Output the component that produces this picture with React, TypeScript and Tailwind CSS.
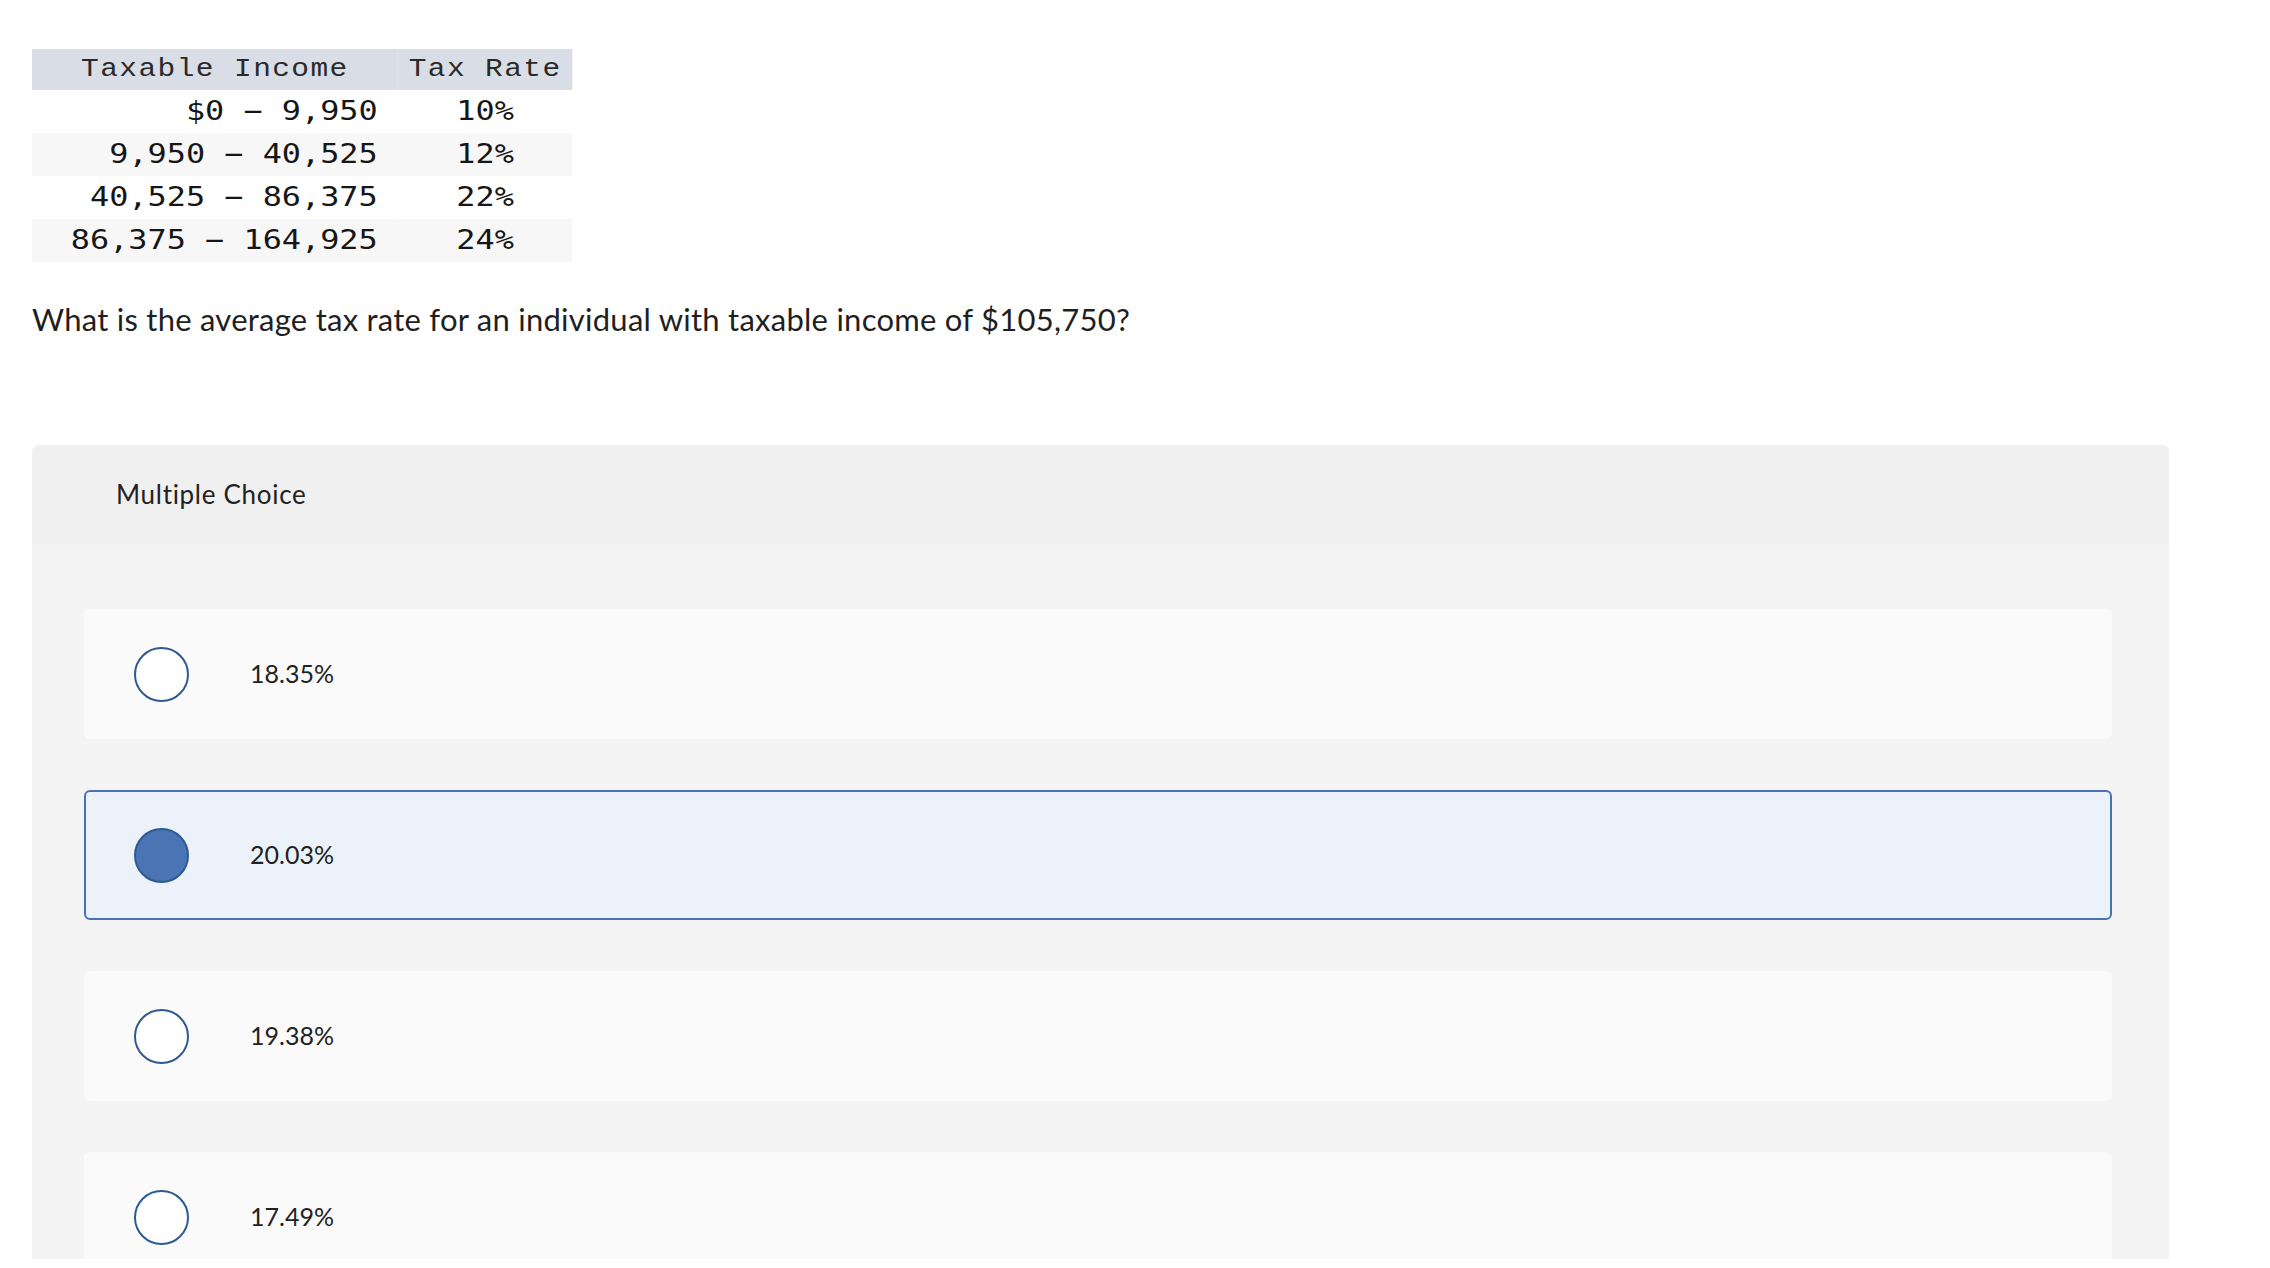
import { useState } from "react";

const brackets = [
  ["$0 − 9,950", "10%"],
  ["9,950 − 40,525", "12%"],
  ["40,525 − 86,375", "22%"],
  ["86,375 − 164,925", "24%"],
];

const choices = ["18.35%", "20.03%", "19.38%", "17.49%"];

export default function App() {
  const [picked, setPicked] = useState(1);

  return (
    <div className="min-h-screen bg-white pl-8 pt-[49px] text-[#222]">
      {/* tax table, shown slightly stretched like the source image */}
      <table className="w-[458px] origin-left scale-x-[1.18] border-collapse leading-[1.2]">
        <thead>
          <tr className="h-[41px] bg-[#d9dde6]">
            <th className="w-[310px] p-0 text-center text-[25px] font-normal tracking-[1.2px] text-[#2a2a2a] [font-family:'Liberation_Mono',monospace]">
              Taxable Income
            </th>
            <th className="p-0 text-center text-[25px] font-normal tracking-[1.2px] text-[#2a2a2a] [font-family:'Liberation_Mono',monospace]">
              Tax Rate
            </th>
          </tr>
        </thead>
        <tbody className="text-[27px] text-[#161616] [font-family:'DejaVu_Sans_Mono',monospace]">
          {brackets.map(([range, rate], i) => (
            <tr key={range} className={i % 2 === 1 ? "h-[43px] bg-[#f7f7f7]" : "h-[43px] bg-white"}>
              <td className="p-0 pr-[17px] text-right whitespace-pre">{range}</td>
              <td className="p-0 text-center">{rate}</td>
            </tr>
          ))}
        </tbody>
      </table>

      <p className="mt-[37px] text-[31px] leading-[40px] tracking-[0.25px] text-[#1f1f1f] [font-family:Lato,sans-serif]">
        What is the average tax rate for an individual with taxable income of $105,750?
      </p>

      {/* answer panel */}
      <div className="mt-[106px] h-[814px] w-[2137px] overflow-hidden rounded-t-md [font-family:Lato,sans-serif]">
        <div className="flex h-[99px] items-center bg-[#f0f0f0] pl-[84px] text-[26px] tracking-[0.7px] text-[#222]">
          Multiple Choice
        </div>
        <div className="flex flex-col gap-[51px] bg-[#f4f4f4] pb-10 pl-[52px] pr-[57px] pt-[65px]">
          {choices.map((c, i) => {
            const on = picked === i;
            return (
              <button
                key={c}
                onClick={() => setPicked(i)}
                className={
                  on
                    ? "flex h-[130px] items-center rounded-md border-2 border-[#4a72b4] bg-[#ebf2fa] pl-[48px] text-left"
                    : "flex h-[130px] items-center rounded-md border-2 border-transparent bg-[#fafafa] pl-[48px] text-left"
                }
              >
                <span
                  className={
                    on
                      ? "h-[55px] w-[55px] shrink-0 rounded-full border-2 border-[#2e5a92] bg-[#4a74b3]"
                      : "h-[55px] w-[55px] shrink-0 rounded-full border-2 border-[#2e5a92] bg-white"
                  }
                />
                <span className="ml-[61px] text-[25px] text-[#222]">{c}</span>
              </button>
            );
          })}
        </div>
      </div>
    </div>
  );
}
